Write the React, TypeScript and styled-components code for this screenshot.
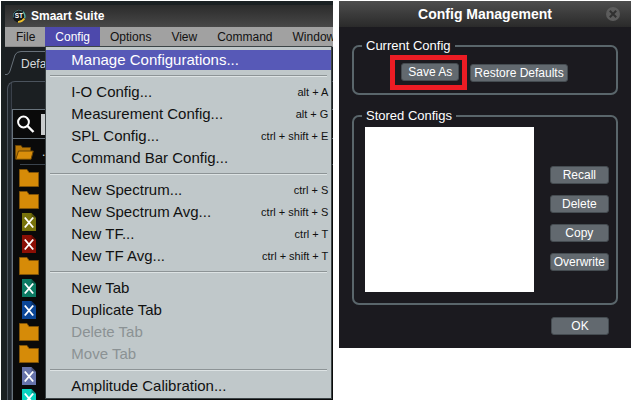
import React from "react";
import styled, { createGlobalStyle } from "styled-components";

const GlobalStyle = createGlobalStyle`
  *, *::before, *::after { box-sizing: border-box; }
  body { margin: 0; background: #fff; font-family: "Liberation Sans", Arial, sans-serif; }
  button, input { font: inherit; color: inherit; }
`;

const Page = styled.div`
  display: flex;
  align-items: flex-start;
  gap: 6px;
  height: 100vh;
  padding: 1px 0 0 1px;
  overflow: hidden;
`;

const AppWindow = styled.main`
  flex: 328 1 0;
  min-width: 0;
  align-self: stretch;
  display: flex;
  flex-direction: column;
  padding: 4px 0 0 4px;
  overflow: hidden;
  background: #1a2022;
`;

const TitleBar = styled.header`
  display: flex;
  align-items: center;
  gap: 5px;
  height: 22px;
  flex: none;
  padding-left: 7px;
  background: linear-gradient(#2b2b2b, #484848);
`;

const AppTitle = styled.h1`
  margin: 0;
  font-size: 12px;
  line-height: 16px;
  color: #fff;
`;

const MenuBar = styled.nav`
  display: flex;
  flex: none;
  height: 20px;
  padding-left: 1px;
  background: #a1a1a1;
  border-bottom: 1px solid #8a8a8a;
`;

const MenuSlot = styled.div`
  position: relative;
  flex: none;
`;

const MenuTitle = styled.button<{ $open?: boolean }>`
  height: 20px;
  padding: 0 10px;
  border: 0;
  background: ${(p) => (p.$open ? "#4d49ac" : "transparent")};
  color: ${(p) => (p.$open ? "#fff" : "#111")};
  font-size: 12px;
  line-height: 20px;
`;

const Dropdown = styled.div`
  position: absolute;
  z-index: 2;
  top: 100%;
  left: 0;
  width: 287px;
  padding: 2px 0 1px;
  background: #c0c8ca;
  border: 1px solid #3c4446;
`;

const MenuItem = styled.button<{ $active?: boolean }>`
  display: flex;
  align-items: center;
  justify-content: space-between;
  width: 100%;
  height: 22px;
  padding: 0 3px 0 25px;
  border: 0;
  border-block: 1px solid #c0c8ca;
  background: ${(p) => (p.$active ? "#5759b7" : "transparent")};
  color: ${(p) => (p.$active ? "#fff" : "#111")};
  font-size: 15px;
  line-height: 20px;
  white-space: nowrap;

  &:disabled { color: #8b9294; }
`;

const Shortcut = styled.kbd`
  font-family: inherit;
  font-size: 11px;
`;

const Separator = styled.hr`
  height: 2px;
  margin: 4px;
  border: 0;
  border-top: 1px solid #8d9496;
  border-bottom: 1px solid #dde3e4;
`;

const Workspace = styled.div`
  flex: 1;
  min-height: 0;
  display: flex;
  flex-direction: column;
  background: #1b1f22;
  overflow: hidden;
`;

const TabStrip = styled.div`
  display: flex;
  align-items: flex-end;
  flex: none;
  height: 28px;
`;

const TabEdge = styled.svg`
  display: block;
  flex: none;
`;

const TabLabel = styled.button`
  height: 24px;
  padding: 0;
  border: 0;
  border-top: 1px solid #68717a;
  background: none;
  color: #d6d9db;
  font-size: 12px;
`;

const Panel = styled.section`
  flex: 1;
  min-height: 0;
  margin: 6px 0 0 2px;
  padding: 27px 0 0 4px;
  border: 1px solid #4b535d;
  border-width: 1px 0 0 1px;
  border-top-left-radius: 8px;
  background: linear-gradient(90deg, #20262c 3px, #3a404a 3px, #3a404a 4px, #1b1f22 4px);
`;

const Browser = styled.div`
  height: 100%;
  border: 1px solid #68737c;
  border-width: 1px 0 0 1px;
  background: #0a0a0a;
`;

const SearchRow = styled.label`
  display: flex;
  align-items: center;
  gap: 6px;
  height: 29px;
  padding: 0 4px 0 3px;
  border-bottom: 1px solid #68737c;
`;

const SearchInput = styled.input`
  flex: 1;
  min-width: 0;
  height: 21px;
  padding: 0 4px;
  border: 0;
  background: #c9cccd;
`;

const RootRow = styled.div`
  display: flex;
  align-items: center;
  gap: 8px;
  height: 25px;
  margin-left: 2px;
  color: #dfe2e4;
  font-size: 12px;
`;

const Tree = styled.ul`
  list-style: none;
  margin: 0 0 0 7px;
  padding: 2px 0 0;
  border-top: 1px solid #3a434d;
`;

const TreeRow = styled.li`
  display: flex;
  align-items: center;
  height: 22px;
  width: 20px;
  justify-content: center;
  margin-left: -1px;
`;

const Dialog = styled.section`
  flex: 292 1 0;
  min-width: 0;
  background: #1b1a1f;
  color: #fff;
  padding-bottom: 13px;
`;

const DialogBar = styled.header`
  display: grid;
  grid-template-columns: 36px 1fr 36px;
  align-items: center;
  height: 26px;
  background: linear-gradient(#4d4d4d, #2a2a2a);
`;

const DialogTitle = styled.h2`
  grid-column: 2;
  margin: 0;
  text-align: center;
  font-size: 14px;
  line-height: 26px;
  white-space: nowrap;
`;

const CloseButton = styled.button`
  display: block;
  justify-self: center;
  padding: 0;
  border: 0;
  background: none;
  line-height: 0;
`;

const Group = styled.fieldset`
  margin: 0 13px;
  min-width: 0;
  border: 2px solid #5a666b;
  border-radius: 7px;
`;

const CurrentGroup = styled(Group)`
  display: flex;
  justify-content: center;
  align-items: center;
  gap: 3px;
  margin-top: 11px;
  padding: 1px 20px 3px 8px;
`;

const StoredGroup = styled(Group)`
  margin-top: 13px;
  padding: 3px 7px 11px 8px;
`;

const Legend = styled.legend`
  padding: 0 4px;
  font-size: 13px;
  line-height: 16px;
`;

const Columns = styled.div`
  display: flex;
  align-items: center;
  gap: 16px;
  padding-left: 3px;
`;

const ConfigList = styled.ul`
  flex: 1;
  height: 165px;
  margin: 0;
  padding: 0;
  list-style: none;
  background: #fff;
`;

const ButtonStack = styled.div`
  display: flex;
  flex-direction: column;
  gap: 11px;
  padding-top: 17px;
`;

const PushButton = styled.button`
  min-width: 58px;
  height: 18px;
  padding: 0 3px;
  border: 1px solid #454c51;
  border-radius: 3px;
  background: #62696f;
  color: #fff;
  font-size: 12px;
  line-height: 16px;
  white-space: nowrap;
`;

const Callout = styled.div`
  display: flex;
  padding: 3px 3px 4px 6px;
  border: 5px solid #ec1c24;
`;

const Footer = styled.footer`
  display: flex;
  justify-content: flex-end;
  padding: 12px 22px 0 0;
`;

const Logo = () => (
  <svg width="14" height="14" viewBox="0 0 14 14" aria-hidden="true">
    <circle cx="7" cy="7" r="6.5" fill="#15191a" />
    <path d="M1.2 8.5A6 6 0 0 1 10 1.9" fill="none" stroke="#4f7773" strokeWidth="1" />
    <path d="M11 2.6Q13.8 6 12.6 9.2" fill="none" stroke="#55b4a8" strokeWidth="1.4" />
    <path d="M6 12.8Q10.2 13 12.4 9.6" fill="none" stroke="#efc12d" strokeWidth="1.8" />
    <text x="6.8" y="9.3" textAnchor="middle" fontSize="6.5" fontWeight="700" fill="#fff">ST</text>
  </svg>
);

const SearchIcon = () => (
  <svg width="19" height="19" viewBox="0 0 19 19" fill="none" stroke="#fff" aria-hidden="true">
    <circle cx="7.5" cy="7" r="5.4" strokeWidth="2" />
    <path d="M11.5 11L17.5 17" strokeWidth="2.4" />
  </svg>
);

const OpenFolder = () => (
  <svg width="19" height="16" viewBox="0 0 19 16" stroke="#6b4504" strokeWidth="1" aria-hidden="true">
    <path d="M.5 15V1.5H6L7.5 3.5H15.5V7" fill="#b97806" />
    <path d="M.8 15.3L3.5 7H18.3L16 15.3Z" fill="#d98e0b" />
  </svg>
);

const Folder = () => (
  <svg width="20" height="18" viewBox="0 0 20 18" aria-hidden="true">
    <path d="M.5.5H8L10 3.5H19.5V17.5H.5Z" fill="#d68b08" stroke="#825407" />
  </svg>
);

const DataFile = ({ color }: { color: string }) => (
  <svg width="14" height="18" viewBox="0 0 14 18" aria-hidden="true">
    <path d="M0 0H9.5L14 4.5V18H0Z" fill={color} />
    <path d="M9.5 0V4.5H14Z" fill="#000" fillOpacity=".3" />
    <path d="M2.8 4.5L11.2 14.5M11.2 4.5L2.8 14.5" stroke="#fff" strokeWidth="1.9" />
  </svg>
);

const CloseIcon = () => (
  <svg width="14" height="14" viewBox="0 0 14 14" aria-hidden="true">
    <circle cx="7" cy="7" r="7" fill="#5c5c5c" />
    <path d="M3.8 3.8L10.2 10.2M10.2 3.8L3.8 10.2" stroke="#303030" strokeWidth="2" />
  </svg>
);

type Entry = { label: string; keys?: string; active?: boolean; disabled?: boolean };

const menuGroups: Entry[][] = [
  [{ label: "Manage Configurations...", active: true }],
  [
    { label: "I-O Config...", keys: "alt + A" },
    { label: "Measurement Config...", keys: "alt + G" },
    { label: "SPL Config...", keys: "ctrl + shift + E" },
    { label: "Command Bar Config..." },
  ],
  [
    { label: "New Spectrum...", keys: "ctrl + S" },
    { label: "New Spectrum Avg...", keys: "ctrl + shift + S" },
    { label: "New TF...", keys: "ctrl + T" },
    { label: "New TF Avg...", keys: "ctrl + shift + T" },
  ],
  [
    { label: "New Tab" },
    { label: "Duplicate Tab" },
    { label: "Delete Tab", disabled: true },
    { label: "Move Tab", disabled: true },
  ],
  [{ label: "Amplitude Calibration..." }],
];

const menus = ["File", "Config", "Options", "View", "Command", "Window"];

const treeItems = [
  "folder", "folder", "#77720b", "#8b0f05", "folder", "#0b7a63",
  "#0b4697", "folder", "folder", "#6673ab", "#07d3c0",
];

const ConfigMenu = () => (
  <Dropdown role="menu" aria-label="Config">
    {menuGroups.map((group, i) => (
      <React.Fragment key={i}>
        {i > 0 && <Separator />}
        {group.map((item) => (
          <MenuItem key={item.label} role="menuitem" $active={item.active} disabled={item.disabled}>
            {item.label}
            {item.keys && <Shortcut>{item.keys}</Shortcut>}
          </MenuItem>
        ))}
      </React.Fragment>
    ))}
  </Dropdown>
);

export default function App() {
  return (
    <>
      <GlobalStyle />
      <Page>
        <AppWindow>
          <TitleBar>
            <Logo />
            <AppTitle>Smaart Suite</AppTitle>
          </TitleBar>
          <MenuBar>
            {menus.map((name) => (
              <MenuSlot key={name}>
                <MenuTitle $open={name === "Config"}>{name}</MenuTitle>
                {name === "Config" && <ConfigMenu />}
              </MenuSlot>
            ))}
          </MenuBar>
          <Workspace>
            <TabStrip>
              <TabEdge width="16" height="24" viewBox="0 0 16 24" fill="none" stroke="#68717a">
                <path d="M0 23.5H2Q4 23 5 20L10 4Q11.5.5 16 .5" />
              </TabEdge>
              <TabLabel>Default</TabLabel>
            </TabStrip>
            <Panel>
              <Browser>
                <SearchRow>
                  <SearchIcon />
                  <SearchInput type="text" aria-label="Search" />
                </SearchRow>
                <RootRow>
                  <OpenFolder />
                  ...
                </RootRow>
                <Tree>
                  {treeItems.map((kind, i) => (
                    <TreeRow key={i}>{kind === "folder" ? <Folder /> : <DataFile color={kind} />}</TreeRow>
                  ))}
                </Tree>
              </Browser>
            </Panel>
          </Workspace>
        </AppWindow>
        <Dialog role="dialog" aria-labelledby="dialog-title">
          <DialogBar>
            <DialogTitle id="dialog-title">Config Management</DialogTitle>
            <CloseButton aria-label="Close">
              <CloseIcon />
            </CloseButton>
          </DialogBar>
          <CurrentGroup>
            <Legend>Current Config</Legend>
            <Callout>
              <PushButton>Save As</PushButton>
            </Callout>
            <PushButton>Restore Defaults</PushButton>
          </CurrentGroup>
          <StoredGroup>
            <Legend>Stored Configs</Legend>
            <Columns>
              <ConfigList aria-label="Stored Configs" />
              <ButtonStack>
                <PushButton>Recall</PushButton>
                <PushButton>Delete</PushButton>
                <PushButton>Copy</PushButton>
                <PushButton>Overwrite</PushButton>
              </ButtonStack>
            </Columns>
          </StoredGroup>
          <Footer>
            <PushButton>OK</PushButton>
          </Footer>
        </Dialog>
      </Page>
    </>
  );
}
